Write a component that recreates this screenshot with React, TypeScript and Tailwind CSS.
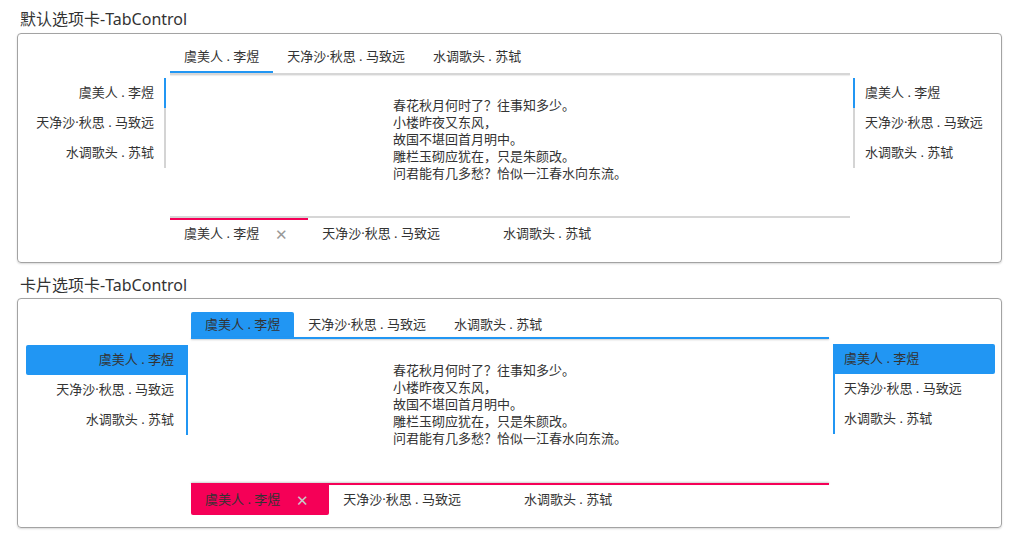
import React from "react";

const tabs = ["虞美人 . 李煜", "天净沙·秋思 . 马致远", "水调歌头 . 苏轼"];
const poem = [
  "春花秋月何时了？往事知多少。",
  "小楼昨夜又东风，",
  "故国不堪回首月明中。",
  "雕栏玉砌应犹在，只是朱颜改。",
  "问君能有几多愁？恰似一江春水向东流。",
];

const font = { fontFamily: '"Noto Sans", "Noto Sans CJK SC", sans-serif' };
const cjk = { fontFamily: '"Noto Sans CJK SC", sans-serif' };

function Poem({ pt }: { pt: string }) {
  return (
    <div className={`flex justify-center ${pt}`}>
      <div className="text-[13px] leading-[17px] text-[#333]" style={cjk}>
        {poem.map((l) => (
          <div key={l}>{l}</div>
        ))}
      </div>
    </div>
  );
}

function DefaultBox() {
  return (
    <div className="mx-[17px] h-[230px] rounded-[4px] border border-[#a3a3a3] shadow-[0_1px_2px_rgba(0,0,0,0.15)] grid grid-cols-[152px_680px_1fr] grid-rows-[41px_141px_46px]">
      <div />
      <div className="flex flex-col justify-end">
        <div className="flex h-[30px]">
          {tabs.map((t, i) => (
            <div
              key={t}
              className={`flex items-center px-[14px] text-[13px] text-[#333] border-b-2 ${
                i === 0 ? "border-[#2196f3]" : "border-transparent"
              }`}
            >
              {t}
            </div>
          ))}
        </div>
        <div className="h-[2px] bg-[#d6d6d6] shadow-[0_1px_1px_rgba(0,0,0,0.08)]" />
      </div>
      <div />

      <div className="pt-[3px] mr-[4px]">
        {tabs.map((t, i) => (
          <div
            key={t}
            className={`flex h-[30px] items-center justify-end pr-[10px] text-[13px] text-[#333] border-r-2 ${
              i === 0 ? "border-[#2196f3]" : "border-[#d4d4d4]"
            }`}
          >
            {t}
          </div>
        ))}
      </div>
      <Poem pt="pt-[21px]" />
      <div className="pt-[3px] ml-[3px]">
        {tabs.map((t, i) => (
          <div
            key={t}
            className={`flex h-[30px] items-center pl-[10px] text-[13px] text-[#333] border-l-2 ${
              i === 0 ? "border-[#2196f3]" : "border-[#d4d4d4]"
            }`}
          >
            {t}
          </div>
        ))}
      </div>

      <div />
      <div className="flex flex-col">
        <div className="h-[2px] bg-[#d6d6d6]" />
        <div className="flex h-[30px]">
          {tabs.map((t, i) => (
            <div
              key={t}
              className={`flex items-center pl-[14px] pr-[9px] text-[13px] text-[#333] border-t-2 ${
                i === 0 ? "border-[#f50057]" : "border-transparent"
              }`}
            >
              <span>{t}</span>
              <span
                className={`ml-[4px] w-[36px] text-center text-[15px] text-[#999] ${
                  i === 0 ? "" : "invisible"
                }`}
              >
                ✕
              </span>
            </div>
          ))}
        </div>
      </div>
      <div />
    </div>
  );
}

function CardBox() {
  return (
    <div className="mx-[17px] h-[230px] rounded-[4px] border border-[#a3a3a3] shadow-[0_1px_2px_rgba(0,0,0,0.15)] pl-[8px] pr-[6px] grid grid-cols-[165px_638px_166px] grid-rows-[40px_144px_44px]">
      <div />
      <div className="flex flex-col justify-end">
        <div className="flex h-[25px]">
          {tabs.map((t, i) => (
            <div
              key={t}
              className={`flex items-center px-[14px] text-[13px] text-[#333] ${
                i === 0 ? "bg-[#2196f3] rounded-t-[2px]" : ""
              }`}
            >
              {t}
            </div>
          ))}
        </div>
        <div className="h-[2px] bg-[#2196f3] shadow-[0_1px_2px_rgba(0,0,0,0.2)]" />
      </div>
      <div />

      <div className="pt-[6px] mr-[3px]">
        <div className="border-r-2 border-[#2196f3]">
          {tabs.map((t, i) => (
            <div
              key={t}
              className={`flex h-[30px] items-center justify-end pr-[12px] text-[13px] text-[#333] ${
                i === 0 ? "bg-[#2196f3] rounded-l-[2px]" : ""
              }`}
            >
              {t}
            </div>
          ))}
        </div>
      </div>
      <Poem pt="pt-[22px]" />
      <div className="pt-[5px] ml-[4px]">
        <div className="border-l-2 border-[#2196f3]">
          {tabs.map((t, i) => (
            <div
              key={t}
              className={`flex h-[30px] items-center pl-[9px] text-[13px] text-[#333] ${
                i === 0 ? "bg-[#2196f3] rounded-r-[2px]" : ""
              }`}
            >
              {t}
            </div>
          ))}
        </div>
      </div>

      <div />
      <div className="flex flex-col">
        <div className="h-[2px] bg-[#f50057] shadow-[0_-1px_2px_rgba(0,0,0,0.2)]" />
        <div className="flex h-[30px]">
          {tabs.map((t, i) => (
            <div
              key={t}
              className={`flex items-center pl-[14px] pr-[9px] text-[13px] text-[#333] ${
                i === 0 ? "bg-[#f50057] rounded-b-[2px]" : ""
              }`}
            >
              <span>{t}</span>
              <span
                className={`ml-[4px] w-[36px] text-center text-[15px] text-[#c8c8c8] ${
                  i === 0 ? "" : "invisible"
                }`}
              >
                ✕
              </span>
            </div>
          ))}
        </div>
      </div>
      <div />
    </div>
  );
}

export default function App() {
  return (
    <div className="w-[1019px] h-[545px] bg-white overflow-hidden" style={font}>
      <div className="pl-[20px] pt-[8px] pb-[3px] text-[16px] leading-[22px] text-[#333]">
        默认选项卡-TabControl
      </div>
      <DefaultBox />
      <div className="pl-[20px] pt-[11px] pb-[2px] text-[16px] leading-[22px] text-[#333]">
        卡片选项卡-TabControl
      </div>
      <CardBox />
    </div>
  );
}
